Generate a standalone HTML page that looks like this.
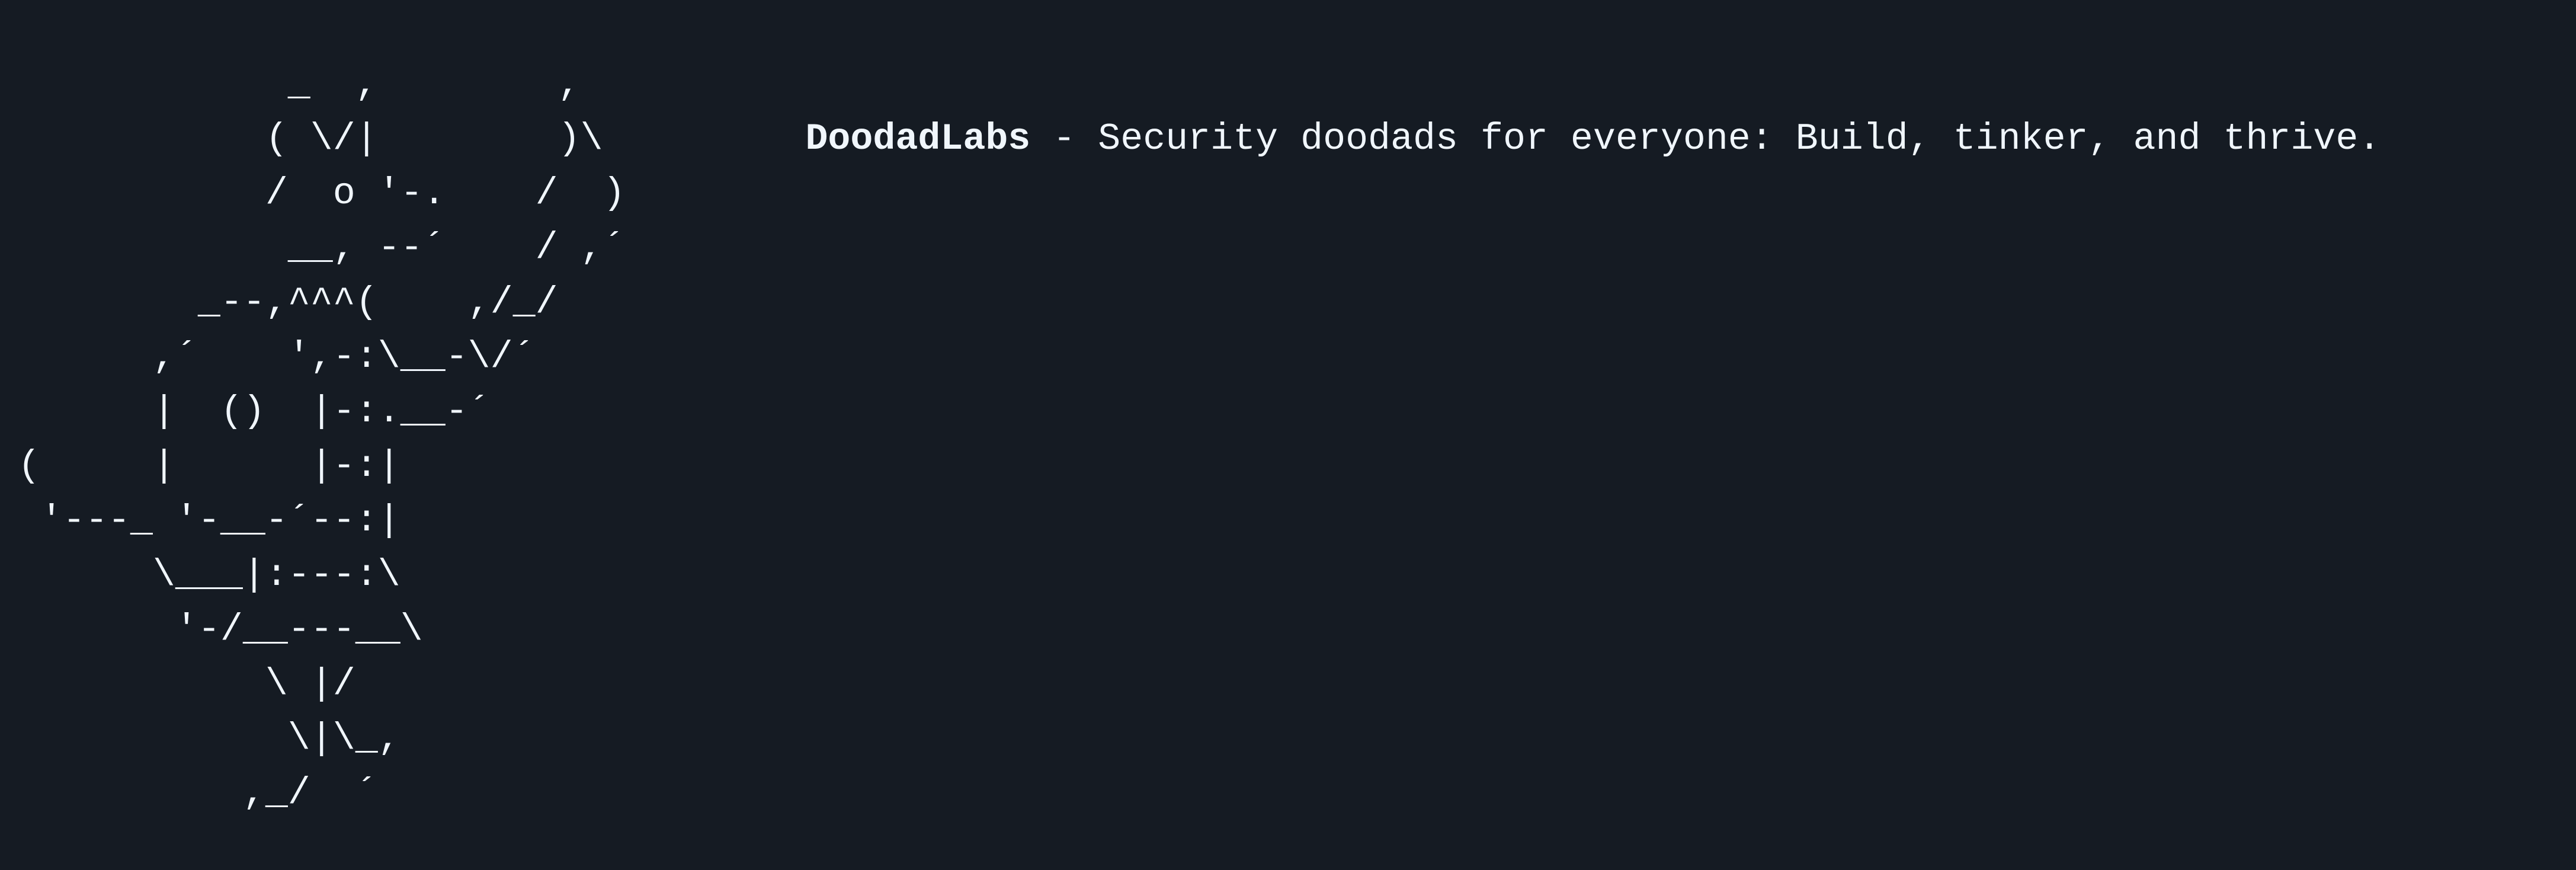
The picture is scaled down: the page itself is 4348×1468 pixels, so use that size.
<!DOCTYPE html>
<html><head><meta charset="utf-8"><style>
html,body{margin:0;padding:0;background:#151b23;width:4348px;height:1468px;overflow:hidden}
pre{position:absolute;left:30px;top:97px;margin:0;font-family:"Liberation Mono",monospace;font-size:63.3px;line-height:92px;color:#f0f6fc;letter-spacing:0}
b{font-weight:bold}
</style></head><body>
<pre>            _  ,        ,
           ( \/|        )\         <b>DoodadLabs</b> - Security doodads for everyone: Build, tinker, and thrive.
           /  o '-.    /  )
            __, --´    / ,´
        _--,^^^(    ,/_/
      ,´    ',-:\__-\/´
      |  ()  |-:.__-´
(     |      |-:|
 '---_ '-__-´--:|
      \___|:---:\
       '-/__---__\
           \ |/
            \|\_,
          ,_/  ´</pre>
</body></html>
